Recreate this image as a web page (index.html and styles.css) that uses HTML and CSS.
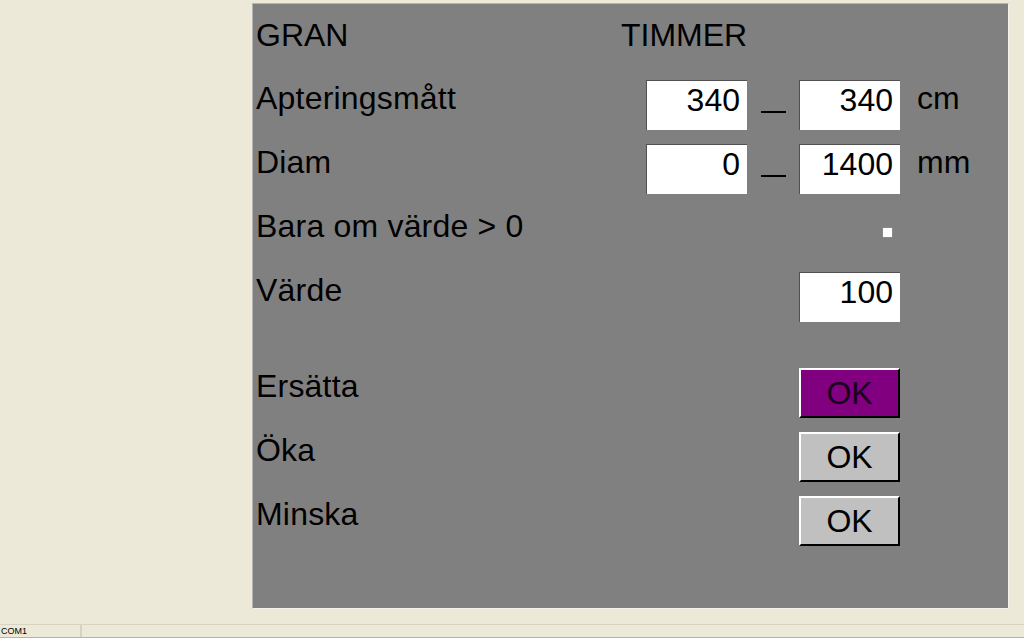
FILE: index.html
```html
<!doctype html>
<html lang="sv">
  <head>
    <meta charset="utf-8">
    <title>Aptering</title>
    <link rel="stylesheet" href="styles.css">
  </head>

  <body>
    <main class="desk">
      <section class="panel">
        <div class="header">
          <span>GRAN</span>
          <span>TIMMER</span>
        </div>

        <div class="row">
          <span class="label">Apteringsmått</span>
          <span class="box c2">340</span>
          <span class="dash"></span>
          <span class="box c4">340</span>
          <span class="unit">cm</span>
        </div>

        <div class="row">
          <span class="label">Diam</span>
          <span class="box c2">0</span>
          <span class="dash"></span>
          <span class="box c4">1400</span>
          <span class="unit">mm</span>
        </div>

        <div class="row">
          <span class="label">Bara om värde &gt; 0</span>
          <span class="check c4"></span>
        </div>

        <div class="row">
          <span class="label">Värde</span>
          <span class="box c4">100</span>
        </div>

        <div class="row gap">
          <span class="label">Ersätta</span>
          <button class="ok c4 active">OK</button>
        </div>

        <div class="row">
          <span class="label">Öka</span>
          <button class="ok c4">OK</button>
        </div>

        <div class="row">
          <span class="label">Minska</span>
          <button class="ok c4">OK</button>
        </div>
      </section>
    </main>

    <footer class="statusbar">
      <span class="cell">COM1</span>
      <span class="cell rest"></span>
    </footer>
  </body>
</html>
```

FILE: styles.css
```css
html, body {
  margin: 0;
  height: 638px;
  overflow: hidden;
}

body {
  background: #ece9d8;
  font-family: "Liberation Sans", Arial, sans-serif;
  color: #000;
  display: flex;
  flex-direction: column;
}

.desk {
  height: 624px;
  flex: none;
  padding: 3px 0 0 252px;
  box-sizing: border-box;
}

.panel {
  width: 757px;
  height: 606px;
  box-sizing: border-box;
  background: #808080;
  border-top: 1px solid #b4b4b4;
  border-left: 1px solid #b4b4b4;
  border-right: 1px solid #f4f2ea;
  border-bottom: 1px solid #f4f2ea;
  padding: 13px 0 0 3px;
  font-size: 32px;
  line-height: 37px;
}

.header {
  display: grid;
  grid-template-columns: 365px auto;
  height: 63px;
}

.row {
  display: grid;
  grid-template-columns: 390px 101px 52px 101px auto;
  height: 64px;
  align-items: start;
}

.row.gap {
  margin-top: 32px;
}

.label {
  grid-column: 1;
  letter-spacing: 0.2px;
}

.c2 {
  grid-column: 2;
}

.c4 {
  grid-column: 4;
}

.box {
  height: 50px;
  box-sizing: border-box;
  background: #fff;
  border-top: 1px solid #505050;
  border-left: 1px solid #505050;
  padding: 1px 7px 0 0;
  text-align: right;
}

.dash {
  grid-column: 3;
  width: 25px;
  height: 31px;
  margin-left: 14px;
  border-bottom: 2px solid #000;
}

.unit {
  grid-column: 5;
  padding-left: 17px;
}

.check {
  justify-self: end;
  width: 9px;
  height: 9px;
  margin: 20px 8px 0 0;
  background: #fff;
  box-shadow: 0 0 1px #b8b8b8;
}

.ok {
  height: 50px;
  box-sizing: border-box;
  margin: 0;
  padding: 0;
  background: #c0c0c0;
  border-top: 2px solid #fff;
  border-left: 2px solid #fff;
  border-right: 2px solid #000;
  border-bottom: 2px solid #000;
  font-family: inherit;
  font-size: 32px;
  line-height: 37px;
  color: #000;
}

.ok.active {
  background: #800080;
  color: #1a001a;
}

.statusbar {
  height: 14px;
  flex: none;
  display: flex;
  border-top: 1px solid #d8d4c4;
  box-sizing: border-box;
  border-bottom: 1px solid #a8b4c8;
  font-size: 9px;
  line-height: 12px;
}

.cell {
  width: 79px;
  padding-left: 1px;
  border-right: 2px solid #d6d2c2;
}

.cell.rest {
  flex: 1;
  border-right: none;
}
```
